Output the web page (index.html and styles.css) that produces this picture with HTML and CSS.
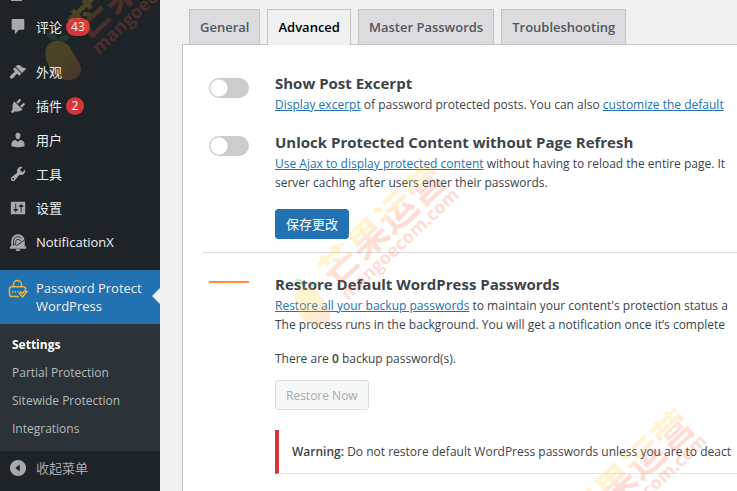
FILE: index.html
```
<!DOCTYPE html>
<html lang="zh-CN">
<head>
    <meta charset="UTF-8">
    <meta name="viewport" content="width=device-width, initial-scale=1.0">
    <title>Password Protect WordPress</title>
    <link rel="stylesheet" href="styles.css">
</head>
<body>
    <nav class="sidebar">
        <ul class="menu">
            <li class="menu-cut"></li>
            <li><a href="#">
                <svg viewBox="0 0 20 20"><path d="M4 1h12c.8 0 1 .3 1 1v10c0 .8-.3 1-1 1h-5l-4.500 5v-5H4c-.8 0-1-.3-1-1V2c0-.8.300-1 1-1z"/></svg>
                <span>评论</span><span class="badge">43</span></a></li>
            <li class="gap"><a href="#">
                <svg viewBox="0 0 20 20"><path d="M14.48 11.06L7.41 3.99l1.5-1.5c.5-.56 2.3-.47 3.51.32 1.21.8 1.43 1.28 2.91 2.1 1.18.64 2.45 1.26 4.45.85zm-.71.71L6.7 4.7 4.93 6.47c-.39.39-.39 1.02 0 1.41l1.06 1.06c.39.39.39 1.03 0 1.42-.6.6-1.43 1.11-2.21 1.69-.35.26-.7.53-1.01.84C1.43 14.23.4 16.08 1.4 17.07c.99 1 2.84-.03 4.18-1.36.31-.31.58-.66.85-1.02.57-.78 1.08-1.61 1.69-2.21.39-.39 1.02-.39 1.41 0l1.06 1.06c.39.39 1.02.39 1.41 0z"/></svg>
                <span>外观</span></a></li>
            <li><a href="#">
                <svg viewBox="0 0 20 20"><path d="M13.11 4.36L9.87 7.6 8 5.73l3.24-3.24c.35-.34 1.05-.2 1.56.32.52.51.66 1.21.31 1.55zm-8 1.77l.91-1.12 9.01 9.01-1.19.84c-.71.71-2.63 1.16-3.82 1.16H6.14L4.9 17.26c-.59.59-1.54.59-2.12 0-.59-.58-.59-1.53 0-2.12l1.24-1.24v-3.88c0-1.13.4-3.19 1.09-3.89zm7.26 3.97l3.24-3.24c.34-.35 1.04-.21 1.55.31.52.51.66 1.21.31 1.55l-3.24 3.25z"/></svg>
                <span>插件</span><span class="badge">2</span></a></li>
            <li><a href="#">
                <svg viewBox="0 0 20 20"><path d="M10 9.25c-2.27 0-2.73-3.44-2.73-3.44C7 4.02 7.82 2 9.97 2c2.16 0 2.98 2.02 2.71 3.81 0 0-.41 3.44-2.68 3.44zm0 2.57L12.72 10c2.39 0 4.52 2.33 4.52 4.53v2.49s-3.65 1.13-7.24 1.13c-3.65 0-7.24-1.13-7.24-1.13v-2.49c0-2.25 1.94-4.48 4.47-4.48z"/></svg>
                <span>用户</span></a></li>
            <li><a href="#">
                <svg viewBox="0 0 20 20"><path d="M16.68 9.77c-1.34 1.34-3.3 1.67-4.95.99l-5.41 6.52c-.99.99-2.59.99-3.58 0s-.99-2.59 0-3.57l6.52-5.42c-.68-1.65-.35-3.61.99-4.95 1.28-1.28 3.12-1.62 4.72-1.06l-2.89 2.89 2.82 2.82 2.86-2.87c.53 1.58.18 3.39-1.08 4.65zM3.81 16.21c.4.39 1.04.39 1.43 0 .4-.4.4-1.04 0-1.43-.39-.4-1.03-.4-1.43 0-.39.39-.39 1.03 0 1.43z"/></svg>
                <span>工具</span></a></li>
            <li><a href="#">
                <svg viewBox="0 0 20 20"><path d="M18 16V4c0-.55-.45-1-1-1H3c-.55 0-1 .45-1 1v12c0 .55.45 1 1 1h14c.55 0 1-.45 1-1zM8 11h1c.55 0 1 .45 1 1s-.45 1-1 1H8v1.5c0 .28-.22.5-.5.5s-.5-.22-.5-.5V13H6c-.55 0-1-.45-1-1s.45-1 1-1h1V5.5c0-.28.22-.5.5-.5s.5.22.5.5V11zm5-2h-1c-.55 0-1-.45-1-1s.45-1 1-1h1V5.5c0-.28.22-.5.5-.5s.5.22.5.5V7h1c.55 0 1 .45 1 1s-.45 1-1 1h-1v5.5c0 .28-.22.5-.5.5s-.5-.22-.5-.5V9z"/></svg>
                <span>设置</span></a></li>
            <li><a href="#">
                <svg viewBox="0 0 20 20">
                    <path d="M2.500 15V9a7.500 7.500 0 0 1 15 0v6H19v2.500H1V15zM7.500 18h5a2.500 2.500 0 0 1-5 0z"/>
                    <path class="bell-line" d="M5 14V9a5 5 0 0 1 9-3M7.500 12V9.500a2.500 2.500 0 0 1 5 0M5.500 12l3 2 10.500-7.500"/>
                </svg>
                <span>NotificationX</span></a></li>
            <li class="gap current"><a href="#">
                <svg class="lock" viewBox="0 0 20 20">
                    <path d="M5.500 8V5.500a4 4 0 0 1 8 0V8M11 17.500H3.500a2 2 0 0 1-2-2V9.800a2 2 0 0 1 2-2h12a2 2 0 0 1 2 2v1.500M11.500 14.500l3 3.500 4.500-5.500-2.500-.5-2 2.500-1.500-1.500z"/>
                    <path class="dots" d="M4 12.800h8"/>
                </svg>
                <span>Password Protect WordPress</span></a></li>
        </ul>
        <ul class="submenu">
            <li><a class="active" href="#">Settings</a></li>
            <li><a href="#">Partial Protection</a></li>
            <li><a href="#">Sitewide Protection</a></li>
            <li><a href="#">Integrations</a></li>
        </ul>
        <button class="collapse" type="button">
            <svg viewBox="0 0 20 20"><path fill-rule="evenodd" d="M10 1a9 9 0 1 0 0 18 9 9 0 0 0 0-18zM12 6v8l-5-4z"/></svg>
            <span>收起菜单</span>
        </button>
    </nav>

    <main class="content">
        <nav class="tabs">
            <a class="tab" href="#">General</a>
            <a class="tab tab-active" href="#">Advanced</a>
            <a class="tab" href="#">Master Passwords</a>
            <a class="tab" href="#">Troubleshooting</a>
        </nav>
        <form class="panel">
            <div class="row">
                <input class="switch" type="checkbox" id="excerpt">
                <div class="text">
                    <label class="title" for="excerpt">Show Post Excerpt</label>
                    <p><a href="#">Display excerpt</a> of password protected posts. You can also <a href="#">customize the default</a></p>
                </div>
            </div>
            <div class="row">
                <input class="switch" type="checkbox" id="ajax">
                <div class="text">
                    <label class="title" for="ajax">Unlock Protected Content without Page Refresh</label>
                    <p><a href="#">Use Ajax to display protected content</a> without having to reload the entire page. It<br>server caching after users enter their passwords.</p>
                    <button class="btn btn-primary" type="button">保存更改</button>
                </div>
            </div>
            <hr>
            <div class="row">
                <span class="dash"></span>
                <div class="text">
                    <h2 class="title">Restore Default WordPress Passwords</h2>
                    <p><a href="#">Restore all your backup passwords</a> to maintain your content's protection status a<br>The process runs in the background. You will get a notification once it’s complete</p>
                    <p class="count">There are <b>0</b> backup password(s).</p>
                    <button class="btn" type="button" disabled>Restore Now</button>
                    <p class="warning"><b>Warning:</b> Do not restore default WordPress passwords unless you are to deact</p>
                </div>
            </div>
        </form>
    </main>

    <svg class="watermark" width="737" height="491" aria-hidden="true">
        <defs>
            <linearGradient id="cjk" x1="0" y1="0" x2="0" y2="1">
                <stop offset="0.4" stop-color="#ffd21f"/>
                <stop offset="0.6" stop-color="#ff5a3c"/>
            </linearGradient>
            <linearGradient id="fruit" x1="0" y1="0" x2="1" y2="1">
                <stop offset="0.4" stop-color="#ffd21f"/>
                <stop offset="1" stop-color="#ff6a3c"/>
            </linearGradient>
            <g id="mark">
                <path fill="url(#fruit)" d="M-10-16C-18-12-18-2-14 6c4 10 12 18 24 16 10-3 12-12 5-21-6-8-6-14-14-17-4-2-8-2-11 0z"/>
                <path fill="#3fa34d" d="M-4-18c-2-6-6-8-12-7 1 5 5 8 12 7zM-3-18c1-5 6-6 11-3-3 4-7 5-11 3z"/>
                <g transform="rotate(-43)">
                    <text class="mark-cjk" x="28" y="5">芒果运营</text>
                    <text class="mark-url" x="29" y="23">mangoecom.com</text>
                </g>
            </g>
        </defs>
        <use href="#mark" x="62" y="58"/>
        <use href="#mark" x="311" y="304"/>
        <use href="#mark" x="559" y="550"/>
    </svg>
</body>
</html>
```
FILE: styles.css
```
*{margin: 0;padding: 0;box-sizing: border-box;}
body{
    display: flex;
    min-height: 100vh;
    overflow: hidden;
    background: #f0f0f0;
    color: #3c434a;
    font: 12px/19px "Open Sans", "Noto Sans CJK SC", sans-serif;
}
ul{list-style: none;}
a{color: #2271b1;}

/* left menu */
.sidebar{
    flex: 0 0 160px;
    background: #1d2327;
}
.menu a, .collapse{
    display: flex;
    gap: 8px;
    padding: 8px;
    color: #f0f0f1;
    font-size: 13px;
    line-height: 18px;
    text-decoration: none;
}
.menu a:lang(zh){font-family: "Open Sans", "Noto Sans CJK SC", sans-serif;}
.menu svg, .collapse svg{
    flex: none;
    width: 20px;
    height: 18px;
    fill: #a7aaad;
}
.menu-cut{
    width: 11px;
    height: 10px;
    margin-left: 11px;
    border-top: 1px solid #a7aaad;
}
.gap{margin-top: 11px;}
.menu .bell-line{
    fill: none;
    stroke: #1d2327;
}
.badge{
    min-width: 18px;
    height: 18px;
    margin-left: -4px;
    padding: 0 5px;
    border-radius: 9px;
    background: #d63638;
    color: #fff;
    font-size: 12px;
    text-align: center;
}
.current{
    position: relative;
    background: #2271b1;
}
.current::after{
    content: "";
    position: absolute;
    right: 0;
    top: 18px;
    border: 8px solid transparent;
    border-left: 0;
    border-right-color: #f0f0f0;
}
.current a{padding: 9px 8px;}
.menu .lock{
    height: 20px;
    fill: none;
    stroke: #f0b23e;
    stroke-width: 1.5;
}
.lock .dots{stroke-dasharray: 1.5 1;}
.submenu{
    padding: 7px 0 8px;
    background: #2c3338;
}
.submenu a{
    display: block;
    padding: 5px 12px;
    color: #b4b9be;
    line-height: 18px;
    text-decoration: none;
}
.submenu .active{
    color: #fff;
    font-weight: 700;
}
.collapse{
    width: 100%;
    border: 0;
    background: none;
    color: #a7aaad;
    font-family: inherit;
}

/* settings */
.content{
    flex: 1;
    min-width: 0;
    padding: 9px 0 0 22px;
    white-space: nowrap;
}
.tabs{
    display: flex;
    gap: 7px;
    padding-left: 7px;
}
.tab{
    padding: 5px 10px;
    border: 1px solid #c3c4c7;
    border-bottom: 0;
    background: #dcdcde;
    color: #50575e;
    font-size: 13px;
    font-weight: 600;
    line-height: 24px;
    text-decoration: none;
}
.tab-active{
    margin-bottom: -1px;
    background: #f0f0f0;
    color: #000;
    z-index: 1;
}
.panel{
    min-height: 447px;
    padding: 27px 0 16px 20px;
    border: 1px solid #c3c4c7;
    border-width: 1px 0 0 1px;
    background: #fff;
}
.row{
    display: flex;
    gap: 26px;
    padding-left: 6px;
}
.row + .row{margin-top: 16px;}
.switch{
    appearance: none;
    flex: none;
    width: 40px;
    height: 20px;
    margin-top: 6px;
    border-radius: 10px;
    background: radial-gradient(circle at 10px 10px, #fff 8px, #ccc 9px);
}
.dash{
    flex: none;
    width: 40px;
    height: 2px;
    margin-top: 8px;
    background: #ff8d3c;
}
.text{flex: 1;}
.title{
    display: block;
    font-size: 15px;
    font-weight: 700;
    line-height: 23px;
}
.btn{
    display: block;
    height: 30px;
    padding: 0 10px;
    border: 1px solid #dcdcde;
    border-radius: 3px;
    background: #f6f7f7;
    color: #a7aaad;
    font: inherit;
}
.btn-primary{
    margin-top: 17px;
    border-color: #2271b1;
    background: #2271b1;
    color: #fff;
    font-size: 13px;
}
.row + .row .title{margin-top: 1px;}
hr{
    height: 1px;
    margin: 13px 0 20px;
    border: 0;
    background: #dcdcde;
}
b{font-weight: 600;}
.count{margin: 15px 0 12px;}
.warning{
    margin-top: 20px;
    padding: 12px 12px 12px 13px;
    border-left: 4px solid #d63638;
    border-bottom: 1px solid #e5e5e5;
}

/* site mark laid over the whole window */
.watermark{
    position: absolute;
    top: 0;
    left: 0;
    opacity: 0.2;
    pointer-events: none;
}
.mark-cjk{
    fill: url(#cjk);
    font: 700 39px "Noto Sans CJK SC", sans-serif;
}
.mark-url{
    fill: #ff5a3c;
    font: 700 18px "Open Sans", sans-serif;
}
```
